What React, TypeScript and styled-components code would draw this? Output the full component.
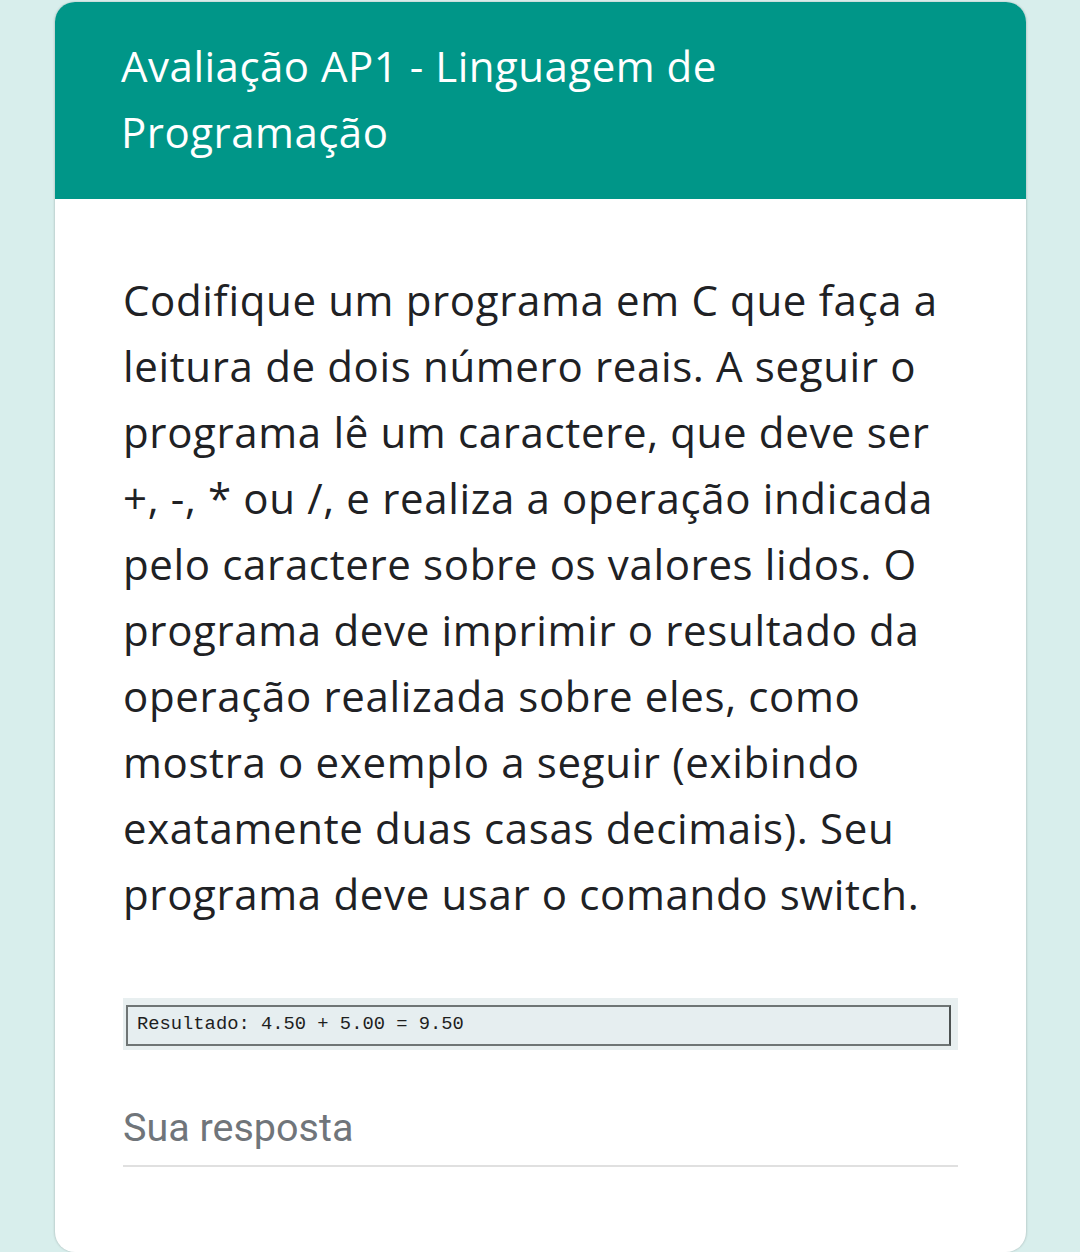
import React from "react";
import styled, { createGlobalStyle } from "styled-components";

const Global = createGlobalStyle`
  html, body { margin: 0; padding: 0; background: #d8eeec; }
  body { font-family: "Open Sans", Roboto, sans-serif; }
`;

const Page = styled.div`
  min-height: 1252px;
  background: #d8eeec;
  padding: 2px 0 0 55px;
  box-sizing: border-box;
  overflow: hidden;
`;

const Card = styled.div`
  width: 971px;
  height: 1250px;
  background: #ffffff;
  border-radius: 20px;
  box-shadow: -1px 0 2px rgba(0, 0, 0, 0.12), 1px 0 2px rgba(0, 0, 0, 0.12);
  overflow: hidden;
  display: flex;
  flex-direction: column;
`;

const Header = styled.div`
  background: #009688;
  padding: 31px 40px 34px 66px;
  color: #ffffff;
  font-family: "Open Sans", sans-serif;
  font-size: 42px;
  line-height: 66px;
  letter-spacing: 0.5px;
`;

const Body = styled.div`
  padding: 68px 68px 0 68px;
  display: flex;
  flex-direction: column;
`;

const Question = styled.p`
  margin: 0;
  width: 830px;
  font-family: "Open Sans", sans-serif;
  font-size: 42px;
  line-height: 66px;
  color: #202124;
  letter-spacing: 0.65px;
`;

const CodeFrame = styled.div`
  margin-top: 71px;
  width: 835px;
  height: 52px;
  background: #e8eff0;
  padding: 7px 7px 4px 3px;
  box-sizing: border-box;
`;

const CodeBox = styled.div`
  height: 100%;
  box-sizing: border-box;
  border: 2px solid #6f7575;
  border-right-color: #4d5252;
  background: #e6eef0;
  display: flex;
  align-items: center;
  padding: 0 0 3px 9px;
  font-family: "Liberation Mono", "Courier New", monospace;
  font-size: 18.8px;
  color: #1e1e1e;
`;

const Answer = styled.div`
  margin-top: 53px;
  width: 835px;
  border-bottom: 2px solid #e0e0e0;
  padding-bottom: 12px;
  font-family: Roboto, sans-serif;
  font-size: 39.5px;
  line-height: 50px;
  color: #70757a;
`;

export default function App() {
  return (
    <>
      <Global />
      <Page>
        <Card>
          <Header>
            Avaliação AP1 - Linguagem de
            <br />
            Programação
          </Header>
          <Body>
            <Question>
              Codifique um programa em C que faça a leitura de dois número reais. A seguir o
              programa lê um caractere, que deve ser +, -, * ou /, e realiza a operação indicada
              pelo caractere sobre os valores lidos. O programa deve imprimir o resultado da
              operação realizada sobre eles, como mostra o exemplo a seguir (exibindo exatamente
              duas casas decimais). Seu programa deve usar o comando switch.
            </Question>
            <CodeFrame>
              <CodeBox>Resultado: 4.50 + 5.00 = 9.50</CodeBox>
            </CodeFrame>
            <Answer>Sua resposta</Answer>
          </Body>
        </Card>
      </Page>
    </>
  );
}
